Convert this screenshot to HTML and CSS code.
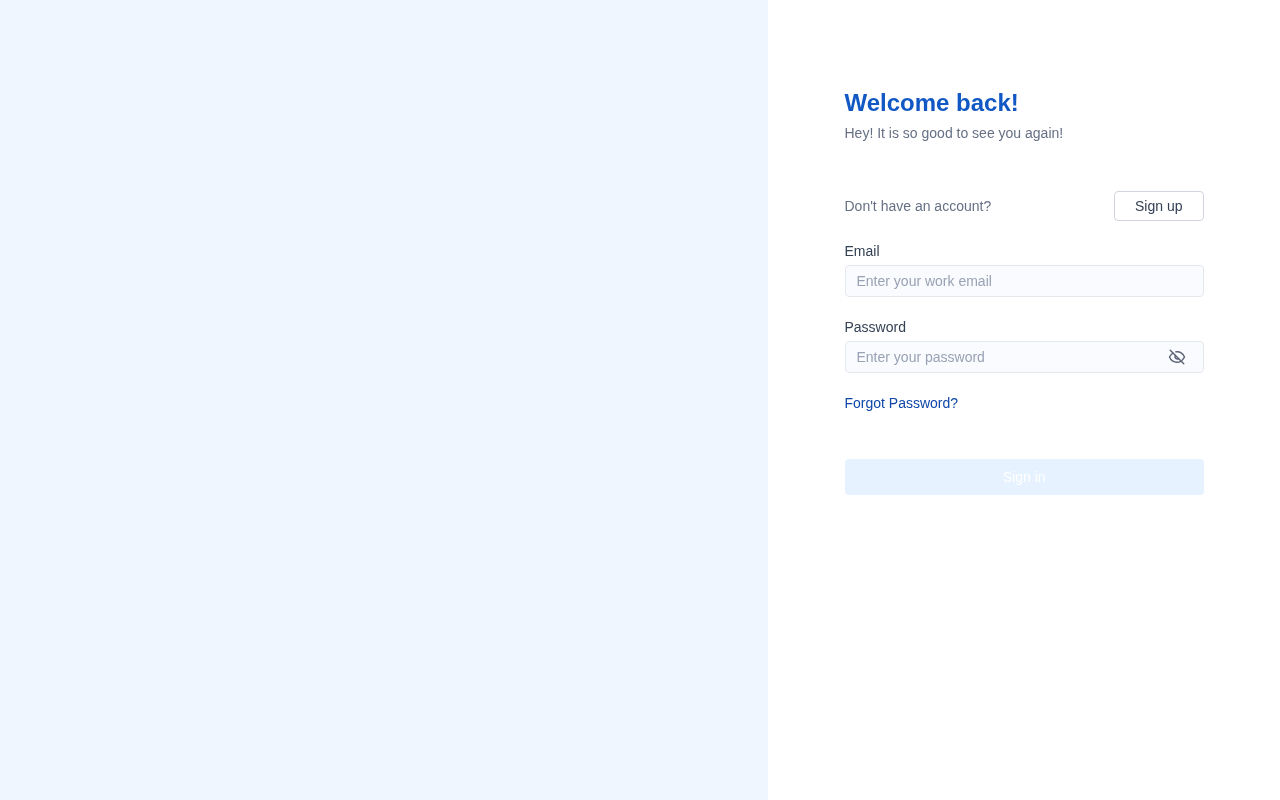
FILE: index.html
```html
<!DOCTYPE html>
<html lang="en">
<head>
<meta charset="utf-8">
<title>Sign in</title>
<link rel="stylesheet" href="styles.css">
</head>
<body>
<main class="page">
  <aside class="hero"></aside>
  <section class="panel">
    <div class="content">
      <h1 class="title">Welcome back!</h1>
      <p class="subtitle">Hey! It is so good to see you again!</p>
      <div class="signup-row">
        <span class="signup-text">Don't have an account?</span>
        <button class="signup-btn" type="button">Sign up</button>
      </div>
      <form class="form">
        <div class="field">
          <label class="label" for="email">Email</label>
          <input class="input" id="email" type="email" placeholder="Enter your work email">
        </div>
        <div class="field">
          <label class="label" for="password">Password</label>
          <div class="input-wrap">
            <input class="input" id="password" type="password" placeholder="Enter your password">
            <svg class="eye" width="18" height="18" viewBox="0 0 24 24" fill="none" stroke="#596273" stroke-width="1.900" stroke-linecap="round" stroke-linejoin="round">
              <path d="M3 3l18 18"/>
              <path d="M10.600 5.100A10.400 10.400 0 0 1 12 5c5 0 8.500 3.500 10 7a13 13 0 0 1-3.200 4.300"/>
              <path d="M6.600 6.700A13.400 13.400 0 0 0 2 12c1.500 3.500 5 7 10 7 1.900 0 3.600-.5 5.100-1.300"/>
              <path d="M9.900 9.900a3 3 0 0 0 4.200 4.200"/>
            </svg>
          </div>
        </div>
        <a class="forgot" href="#">Forgot Password?</a>
        <button class="submit" type="button">Sign in</button>
      </form>
    </div>
  </section>
</main>
</body>
</html>
```
FILE: styles.css
```css
* { box-sizing: border-box; }
html, body { margin: 0; height: 100%; }
body {
  font-family: "Liberation Sans", Arial, sans-serif;
  font-size: 14px;
  background: #fff;
}
.page { display: flex; height: 800px; will-change: transform; }
.hero { width: 768px; background: #eff6ff; }
.panel { width: 512px; padding: 88px 76px 0 76.500px; }
.content { display: flex; flex-direction: column; }
.title {
  margin: 0;
  font-size: 24px;
  line-height: 30px;
  font-weight: 700;
  color: #1158c4;
}
.subtitle {
  margin: 6px 0 0;
  font-size: 14px;
  line-height: 18px;
  color: #667085;
}
.signup-row {
  margin-top: 49px;
  display: flex;
  align-items: center;
  justify-content: space-between;
}
.signup-text { color: #667085; line-height: 18px; }
.signup-btn {
  width: 90px;
  height: 30px;
  padding: 0 0.500px 0 0;
  border: 1px solid #d0d5dd;
  border-radius: 4px;
  background: #fff;
  color: #344054;
  font: 14px "Liberation Sans", Arial, sans-serif;
}
.form { display: flex; flex-direction: column; margin-top: 22px; }
.field { display: flex; flex-direction: column; margin-bottom: 22px; }
.label {
  font-size: 14px;
  line-height: 16px;
  color: #344054;
  margin-bottom: 6px;
}
.input-wrap { position: relative; display: flex; }
.input {
  width: 100%;
  height: 32px;
  padding: 0 11px;
  border: 1px solid #e4e7ec;
  border-radius: 4px;
  background: #fafbff;
  font: 14px "Liberation Sans", Arial, sans-serif;
  color: #344054;
  outline: none;
}
.input::placeholder { color: #98a2b3; opacity: 1; }
.eye { position: absolute; right: 18px; top: 7px; }
.forgot {
  color: #0f46a8;
  text-decoration: none;
  line-height: 16px;
}
.submit {
  margin-top: 48px;
  height: 36px;
  border: 0;
  border-radius: 4px;
  background: #e6f2ff;
  color: #fff;
  font: 14px "Liberation Sans", Arial, sans-serif;
}
```
